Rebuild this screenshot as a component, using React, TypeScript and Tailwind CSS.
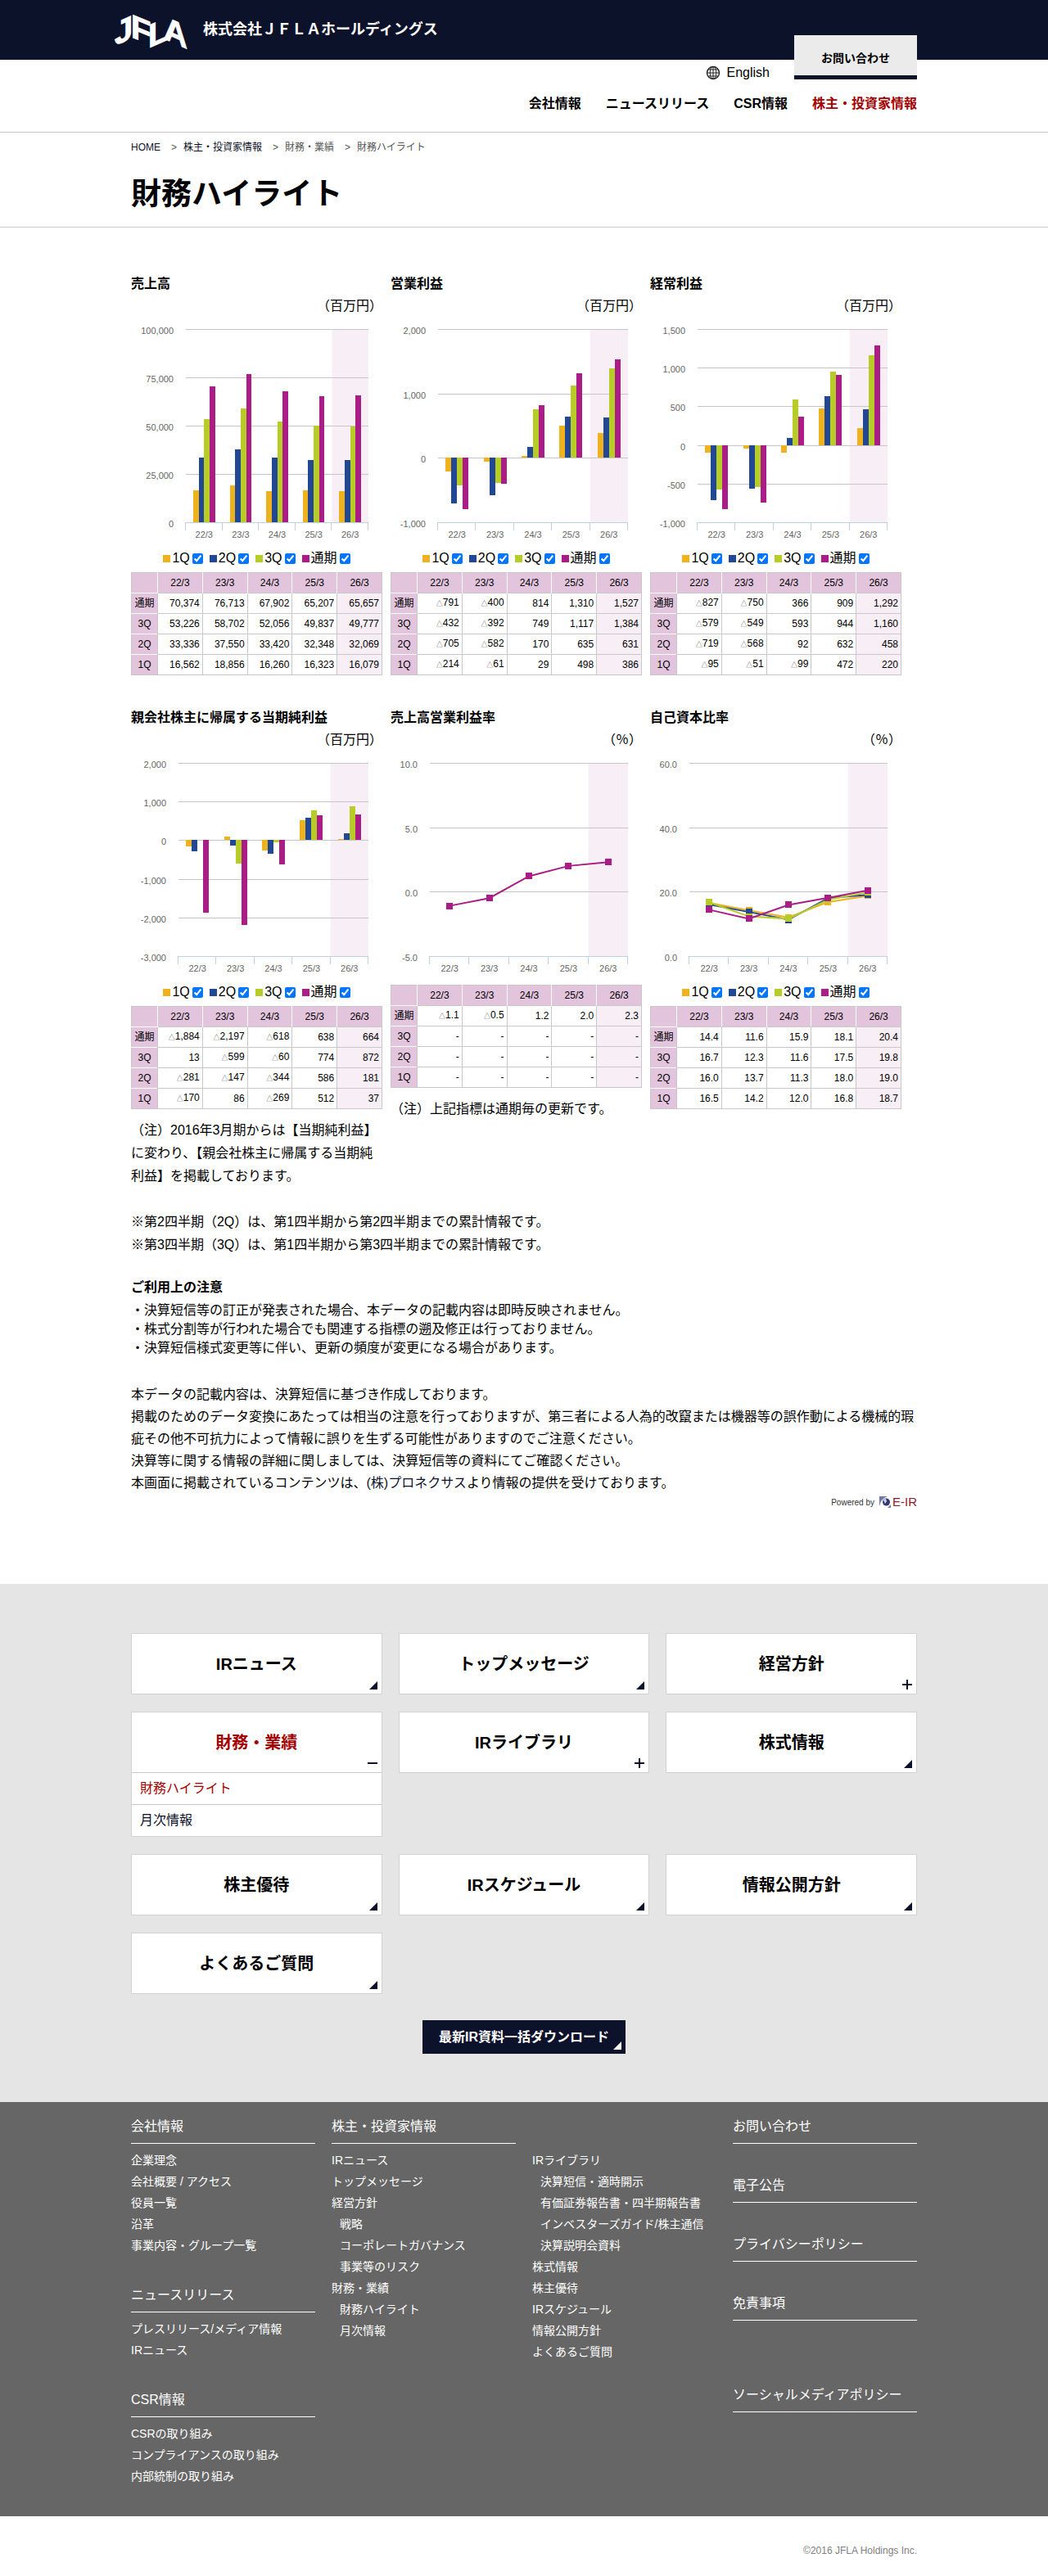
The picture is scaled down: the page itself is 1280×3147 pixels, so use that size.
import React from "react";

const YEARS = ["22/3", "23/3", "24/3", "25/3", "26/3"];
const TERMS = ["1Q", "2Q", "3Q", "通期"];
const COLORS = ["#edb21e", "#224894", "#b7cc27", "#aa1c86"];

type Panel = {
  title: string;
  unit: string;
  type: "bar" | "line";
  ticks: number[];
  left: number;
  digits: number;
  // one list per term, in the order of TERMS
  data: (number | null)[][];
  legend: boolean;
  note?: string;
};

const PANELS: Panel[] = [
  {
    title: "売上高",
    unit: "（百万円）",
    type: "bar",
    ticks: [0, 25000, 50000, 75000, 100000],
    left: 67,
    digits: 0,
    legend: true,
    data: [
      [16562, 18856, 16260, 16323, 16079],
      [33336, 37550, 33420, 32348, 32069],
      [53226, 58702, 52056, 49837, 49777],
      [70374, 76713, 67902, 65207, 65657],
    ],
  },
  {
    title: "営業利益",
    unit: "（百万円）",
    type: "bar",
    ticks: [-1000, 0, 1000, 2000],
    left: 58,
    digits: 0,
    legend: true,
    data: [
      [-214, -61, 29, 498, 386],
      [-705, -582, 170, 635, 631],
      [-432, -392, 749, 1117, 1384],
      [-791, -400, 814, 1310, 1527],
    ],
  },
  {
    title: "経常利益",
    unit: "（百万円）",
    type: "bar",
    ticks: [-1000, -500, 0, 500, 1000, 1500],
    left: 58,
    digits: 0,
    legend: true,
    data: [
      [-95, -51, -99, 472, 220],
      [-719, -568, 92, 632, 458],
      [-579, -549, 593, 944, 1160],
      [-827, -750, 366, 909, 1292],
    ],
  },
  {
    title: "親会社株主に帰属する当期純利益",
    unit: "（百万円）",
    type: "bar",
    ticks: [-3000, -2000, -1000, 0, 1000, 2000],
    left: 58,
    digits: 0,
    legend: true,
    note: "（注）2016年3月期からは【当期純利益】に変わり、【親会社株主に帰属する当期純利益】を掲載しております。",
    data: [
      [-170, 86, -269, 512, 37],
      [-281, -147, -344, 586, 181],
      [13, -599, -60, 774, 872],
      [-1884, -2197, -618, 638, 664],
    ],
  },
  {
    title: "売上高営業利益率",
    unit: "（％）",
    type: "line",
    ticks: [-5, 0, 5, 10],
    left: 48,
    digits: 1,
    legend: false,
    note: "（注）上記指標は通期毎の更新です。",
    data: [
      [null, null, null, null, null],
      [null, null, null, null, null],
      [null, null, null, null, null],
      [-1.1, -0.5, 1.2, 2.0, 2.3],
    ],
  },
  {
    title: "自己資本比率",
    unit: "（％）",
    type: "line",
    ticks: [0, 20, 40, 60],
    left: 48,
    digits: 1,
    legend: true,
    data: [
      [16.5, 14.2, 12.0, 16.8, 18.7],
      [16.0, 13.7, 11.3, 18.0, 19.0],
      [16.7, 12.3, 11.6, 17.5, 19.8],
      [14.4, 11.6, 15.9, 18.1, 20.4],
    ],
  },
];

const format = (value: number, digits: number) =>
  value.toLocaleString("en-US", {
    minimumFractionDigits: digits,
    maximumFractionDigits: digits,
  });

const Chart = ({ panel, shown }: { panel: Panel; shown: boolean[] }) => {
  const top = 15;
  const bottom = 251;
  const right = 290;
  const { ticks, left, digits } = panel;
  const min = ticks[0];
  const max = ticks[ticks.length - 1];
  const step = (right - left) / YEARS.length;
  const y = (v: number) => bottom - ((v - min) / (max - min)) * (bottom - top);
  const center = (i: number) => left + step * (i + 0.5);
  const barWidth = (step * 0.6) / TERMS.length;

  return (
    <svg viewBox="0 0 307 280" className="block w-full" role="img" aria-label={panel.title}>
      <rect x={right - step} y={top} width={step} height={bottom - top} fill="#f7eef6" />
      {ticks.map((t) => (
        <g key={t}>
          {t !== min && (
            <path d={`M${left} ${Math.round(y(t)) + 0.5}H${right}`} stroke="#c6c6c6" />
          )}
          <text x={left - 15} y={Math.round(y(t)) + 6} fontSize="11" fill="#666" textAnchor="end">
            {format(t, digits)}
          </text>
        </g>
      ))}
      {panel.type === "bar" &&
        panel.data.map((row, s) =>
          shown[s]
            ? row.map((v, i) => (
                <rect
                  key={`${s}-${i}`}
                  x={left + step * (i + 0.2) + barWidth * s}
                  y={Math.min(y(v ?? 0), y(0))}
                  width={barWidth}
                  height={Math.abs(y(v ?? 0) - y(0))}
                  fill={COLORS[s]}
                  shapeRendering="crispEdges"
                />
              ))
            : null
        )}
      <path d={`M${left} ${bottom + 0.5}H${right}`} stroke="#c0d0e0" />
      {[0, 1, 2, 3, 4, 5].map((i) => (
        <path
          key={i}
          d={`M${Math.round(left + step * i) - 0.5} ${bottom}v10`}
          stroke="#c0d0e0"
        />
      ))}
      {panel.type === "line" &&
        panel.data.map((row, s) =>
          shown[s] && row[0] !== null ? (
            <g key={s}>
              <polyline
                points={row.map((v, i) => `${center(i)},${y(v ?? 0)}`).join(" ")}
                fill="none"
                stroke={COLORS[s]}
                strokeWidth="2"
              />
              {row.map((v, i) => (
                <rect
                  key={i}
                  x={center(i) - 4}
                  y={y(v ?? 0) - 4}
                  width="8"
                  height="8"
                  fill={COLORS[s]}
                  shapeRendering="crispEdges"
                />
              ))}
            </g>
          ) : null
        )}
      {YEARS.map((label, i) => (
        <text key={label} x={center(i)} y="270" fontSize="11" fill="#666" textAnchor="middle">
          {label}
        </text>
      ))}
    </svg>
  );
};

const Swatch = ({ color }: { color: string }) => (
  <svg width="9" height="9" className="mr-0.5" aria-hidden="true">
    <rect width="9" height="9" fill={color} />
  </svg>
);

const DataTable = ({ panel }: { panel: Panel }) => (
  <table className="mt-1.5 w-full table-fixed border-collapse border border-[#c8c8c8] text-[12px] leading-4">
    <thead>
      <tr className="h-[25px] bg-[#e3c4dd]">
        <th className="w-8 border-r border-white" aria-label="期" />
        {YEARS.map((label) => (
          <th key={label} className="border-l border-white p-0 font-normal">
            {label}
          </th>
        ))}
      </tr>
    </thead>
    <tbody>
      {[3, 2, 1, 0].map((s) => (
        <tr key={s} className="h-[25px]">
          <th className="border-t border-white bg-[#e3c4dd] p-0 font-normal">{TERMS[s]}</th>
          {panel.data[s].map((v, i) => (
            <td
              key={i}
              className="border border-[#c8c8c8] py-0 pr-[3px] pl-0 text-right last:bg-[#f7eef6]"
            >
              {v === null ? (
                "-"
              ) : (
                <>
                  {v < 0 && <span className="text-[8px] text-[#555]">△</span>}
                  {format(Math.abs(v), panel.digits)}
                </>
              )}
            </td>
          ))}
        </tr>
      ))}
    </tbody>
  </table>
);

const PanelView = ({ panel }: { panel: Panel }) => {
  const [shown, setShown] = React.useState([true, true, true, true]);

  return (
    <section>
      <h2 className="leading-[27px] font-bold">{panel.title}</h2>
      <p className="text-right leading-[27px]">{panel.unit}</p>
      <Chart panel={panel} shown={shown} />
      {panel.legend && (
        <div className="flex h-[26px] items-center justify-center gap-2 pt-1">
          {TERMS.map((term, s) => (
            <label key={term} className="flex items-center">
              <Swatch color={COLORS[s]} />
              {term}
              <input
                type="checkbox"
                checked={shown[s]}
                onChange={() => setShown(shown.map((v, i) => (i === s ? !v : v)))}
                className="ml-[3px] size-[13px]"
              />
            </label>
          ))}
        </div>
      )}
      <DataTable panel={panel} />
      {panel.note && <p className="mt-3 leading-7">{panel.note}</p>}
    </section>
  );
};

const Logo = () => (
  <svg width="90" height="56" viewBox="0 0 90 56" className="overflow-visible" role="img" aria-label="JFLA">
    <g
      fill="#fff"
      stroke="#fff"
      fontFamily="'Liberation Sans', sans-serif"
      fontWeight="bold"
      fontSize="40"
    >
      <text transform="translate(0 47) skewY(-24)">J</text>
      <text transform="translate(20 36) skewY(22)">F</text>
      <text transform="translate(41 50) skewY(-24)">L</text>
      <text transform="translate(60 38) skewY(24)">A</text>
    </g>
  </svg>
);

const Globe = () => (
  <svg width="18" height="18" viewBox="0 0 18 18" fill="none" stroke="#222" aria-hidden="true">
    <circle cx="9" cy="9" r="7.5" strokeWidth="1.4" />
    <ellipse cx="9" cy="9" rx="3.8" ry="7.5" />
    <path d="M9 1.500v15M1.500 9h15M2.800 5h12.400M2.800 13h12.400" />
  </svg>
);

const NAV = ["会社情報", "ニュースリリース", "CSR情報", "株主・投資家情報"];

const Header = () => (
  <header className="border-b border-[#c8c8c8]">
    <div className="h-[73px] bg-[#0d122b]">
      <div className="mx-auto flex h-full max-w-[1000px] items-center">
        <a href="#top">
          <Logo />
        </a>
        <p className="ml-[18px] text-[18px] font-bold text-white">株式会社ＪＦＬＡホールディングス</p>
      </div>
    </div>
    <div className="relative mx-auto h-[88px] max-w-[960px]">
      <div className="flex h-8 items-center justify-end pr-[180px]">
        <a href="#english" className="flex items-center gap-2">
          <Globe />
          English
        </a>
      </div>
      <a
        href="#contact"
        className="absolute -top-[30px] right-0 flex h-[54px] w-[150px] items-center justify-center border-b-[5px] border-[#0d122b] bg-[#ebebeb] pt-2 text-[14px] font-bold"
      >
        お問い合わせ
      </a>
      <nav className="flex h-11 items-center justify-end gap-[30px] font-bold">
        {NAV.map((item, i) => (
          <a key={item} href="#nav" className={i === 3 ? "text-[#a50000]" : ""}>
            {item}
          </a>
        ))}
      </nav>
    </div>
  </header>
);

const Breadcrumb = () => (
  <nav className="flex h-9 items-center text-[12px] text-[#555]">
    <a href="#home" className="text-[#0d122b]">
      HOME
    </a>
    <span className="mr-2 ml-[13px]">&gt;</span>
    <a href="#ir" className="text-[#0d122b]">
      株主・投資家情報
    </a>
    <span className="mr-2 ml-[13px]">&gt;</span>
    <span>財務・業績</span>
    <span className="mr-2 ml-[13px]">&gt;</span>
    <span>財務ハイライト</span>
  </nav>
);

const Notes = () => (
  <div>
    <div className="mt-7 leading-7">
      <p>※第2四半期（2Q）は、第1四半期から第2四半期までの累計情報です。</p>
      <p>※第3四半期（3Q）は、第1四半期から第3四半期までの累計情報です。</p>
    </div>
    <h2 className="mt-6 leading-[27px] font-bold">ご利用上の注意</h2>
    <ul className="mt-[3px] leading-[23px]">
      <li>・決算短信等の訂正が発表された場合、本データの記載内容は即時反映されません。</li>
      <li>・株式分割等が行われた場合でも関連する指標の遡及修正は行っておりません。</li>
      <li>・決算短信様式変更等に伴い、更新の頻度が変更になる場合があります。</li>
    </ul>
    <div className="mt-8 leading-[27px]">
      <p>本データの記載内容は、決算短信に基づき作成しております。</p>
      <p>
        掲載のためのデータ変換にあたっては相当の注意を行っておりますが、第三者による人為的改竄または機器等の誤作動による機械的瑕疵その他不可抗力によって情報に誤りを生ずる可能性がありますのでご注意ください。
      </p>
      <p>決算等に関する情報の詳細に関しましては、決算短信等の資料にてご確認ください。</p>
      <p>
        本画面に掲載されているコンテンツは、
        <a href="#pronexus" className="text-[#0d122b]">
          (株)プロネクサス
        </a>
        より情報の提供を受けております。
      </p>
    </div>
    <div className="flex h-5 items-center justify-end text-[10px] text-[#333]">
      Powered by
      <svg width="14" height="14" viewBox="0 0 14 14" className="ml-1.5" aria-hidden="true">
        <path d="M0 0h10L6 2 2 6 0 12z" fill="#7276a8" />
        <circle cx="8.500" cy="7" r="4.500" fill="#34396f" />
        <path d="M5 4l3-1 1 3-2 3z" fill="#d5d7e8" />
        <path d="M10 14l4-4v4z" fill="#7276a8" />
      </svg>
      <span className="ml-0.5 text-[15px] text-[#8c1c2c]">E-IR</span>
    </div>
  </div>
);

type Mark = "corner" | "plus" | "minus";

const MENU: { label: string; mark: Mark; children?: string[] }[] = [
  { label: "IRニュース", mark: "corner" },
  { label: "トップメッセージ", mark: "corner" },
  { label: "経営方針", mark: "plus" },
  { label: "財務・業績", mark: "minus", children: ["財務ハイライト", "月次情報"] },
  { label: "IRライブラリ", mark: "plus" },
  { label: "株式情報", mark: "corner" },
  { label: "株主優待", mark: "corner" },
  { label: "IRスケジュール", mark: "corner" },
  { label: "情報公開方針", mark: "corner" },
  { label: "よくあるご質問", mark: "corner" },
];

const MARK_PATHS = {
  corner: "M12 2v10H2z",
  plus: "M5 0h2v5h5v2H7v5H5V7H0V5h5z",
  minus: "M0 5h12v2H0z",
};

const CornerMark = ({ mark, className }: { mark: Mark; className: string }) => (
  <svg width="12" height="12" className={`absolute right-[5px] bottom-[5px] ${className}`} aria-hidden="true">
    <path d={MARK_PATHS[mark]} fill="currentColor" />
  </svg>
);

const LocalMenu = () => (
  <div className="bg-[#e5e5e5] pt-[60px] pb-[59px]">
    <div className="mx-auto grid max-w-[960px] grid-cols-3 items-start gap-x-5 gap-y-[21px]">
      {MENU.map((item) => (
        <div key={item.label} className="border border-[#d2d2d2] bg-white">
          <a
            href="#menu"
            className={
              item.children
                ? "relative flex h-[73px] items-center justify-center text-[20px] font-bold text-[#a50000]"
                : "relative flex h-[73px] items-center justify-center text-[20px] font-bold"
            }
          >
            {item.label}
            <CornerMark mark={item.mark} className="text-[#0d122b]" />
          </a>
          {item.children?.map((child, i) => (
            <a
              key={child}
              href="#child"
              className={
                i === 0
                  ? "flex h-[39px] items-center border-t border-[#c8c8c8] px-2.5 text-[#a50000]"
                  : "flex h-[39px] items-center border-t border-[#c8c8c8] px-2.5 text-[#0d122b]"
              }
            >
              {child}
            </a>
          ))}
        </div>
      ))}
    </div>
    <a
      href="#download"
      className="relative mx-auto mt-8 flex h-[41px] w-[248px] items-center justify-center bg-[#0d122b] font-bold text-white"
    >
      最新IR資料一括ダウンロード
      <CornerMark mark="corner" className="text-white" />
    </a>
  </div>
);

const FooterHeading = ({ children }: { children: React.ReactNode }) => (
  <h3 className="border-b border-white pb-2 leading-6">
    <a href="#footer">{children}</a>
  </h3>
);

// items that start with ">" are second level
const FooterList = ({ items }: { items: string[] }) => (
  <ul className="mt-[7px] text-[14px] leading-[26px]">
    {items.map((item) => (
      <li key={item} className={item[0] === ">" ? "pl-2.5" : ""}>
        <a href="#footer">{item.replace(">", "")}</a>
      </li>
    ))}
  </ul>
);

const Footer = () => (
  <footer>
    <div className="bg-[#666] pt-[18px] pb-9 text-white">
      <div className="mx-auto grid max-w-[960px] grid-cols-4 gap-x-5">
        <div>
          <FooterHeading>会社情報</FooterHeading>
          <FooterList items={["企業理念", "会社概要 / アクセス", "役員一覧", "沿革", "事業内容・グループ一覧"]} />
          <div className="mt-9">
            <FooterHeading>ニュースリリース</FooterHeading>
            <FooterList items={["プレスリリース/メディア情報", "IRニュース"]} />
          </div>
          <div className="mt-9">
            <FooterHeading>CSR情報</FooterHeading>
            <FooterList items={["CSRの取り組み", "コンプライアンスの取り組み", "内部統制の取り組み"]} />
          </div>
        </div>
        <div>
          <FooterHeading>株主・投資家情報</FooterHeading>
          <FooterList
            items={[
              "IRニュース",
              "トップメッセージ",
              "経営方針",
              ">戦略",
              ">コーポレートガバナンス",
              ">事業等のリスク",
              "財務・業績",
              ">財務ハイライト",
              ">月次情報",
            ]}
          />
        </div>
        <div className="pt-[33px]">
          <FooterList
            items={[
              "IRライブラリ",
              ">決算短信・適時開示",
              ">有価証券報告書・四半期報告書",
              ">インベスターズガイド/株主通信",
              ">決算説明会資料",
              "株式情報",
              "株主優待",
              "IRスケジュール",
              "情報公開方針",
              "よくあるご質問",
            ]}
          />
        </div>
        <div>
          <div className="flex flex-col gap-[39px]">
            <FooterHeading>お問い合わせ</FooterHeading>
            <FooterHeading>電子公告</FooterHeading>
            <FooterHeading>プライバシーポリシー</FooterHeading>
            <FooterHeading>免責事項</FooterHeading>
          </div>
          <div className="mt-[79px]">
            <FooterHeading>ソーシャルメディアポリシー</FooterHeading>
          </div>
        </div>
      </div>
    </div>
    <p className="mx-auto max-w-[960px] pt-8 pb-5 text-right text-[12px] leading-5 text-[#808080]">
      ©2016 JFLA Holdings Inc.
    </p>
  </footer>
);

const App = () => {
  return (
    <div
      id="top"
      className="bg-white font-['Liberation_Sans','Noto_Sans_CJK_JP',sans-serif] text-[16px] text-black"
    >
      <Header />
      <main>
        <div className="border-b border-[#c8c8c8]">
          <div className="mx-auto max-w-[960px]">
            <Breadcrumb />
            <h1 className="flex h-[79px] items-center text-[37px] font-bold">財務ハイライト</h1>
          </div>
        </div>
        <div className="mx-auto max-w-[960px] pt-[55px] pb-[90px]">
          <div className="grid max-w-[941px] grid-cols-3 gap-x-2.5 gap-y-[38px]">
            {PANELS.map((panel) => (
              <PanelView key={panel.title} panel={panel} />
            ))}
          </div>
          <Notes />
        </div>
        <LocalMenu />
      </main>
      <Footer />
    </div>
  );
};

export default App;
